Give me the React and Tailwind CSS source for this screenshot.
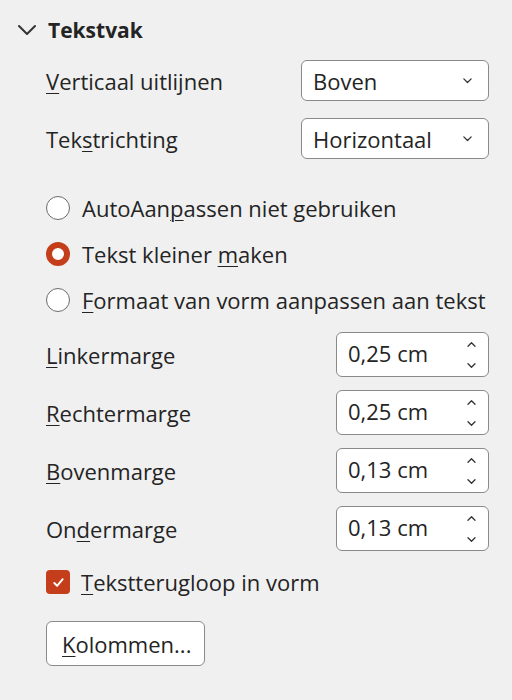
import { useState } from 'react';

const font = { fontFamily: '"Open Sans", "Noto Sans", Arial, sans-serif' };

function U({ children }) {
  return <span className="underline underline-offset-[3px] decoration-1">{children}</span>;
}

function Chevron({ className }) {
  return (
    <svg viewBox="0 0 16 16" className={className} fill="none" stroke="currentColor" strokeWidth="1.6" strokeLinecap="round" strokeLinejoin="round">
      <path d="M3.5 6l4.5 4.5L12.5 6" />
    </svg>
  );
}

function Select({ value }) {
  return (
    <div className="w-[188px] h-[41px] bg-white border border-[#8a8a8a] rounded-[6px] flex items-center justify-between pl-[11px] pr-[14px]">
      <span>{value}</span>
      <Chevron className="w-[13px] h-[13px] text-[#333]" />
    </div>
  );
}

function Spin({ value }) {
  return (
    <div className="w-[153px] h-[45px] bg-white border border-[#8a8a8a] rounded-[6px] flex items-center justify-between pl-[11px] pr-[11px]">
      <span className="-mt-[4px]">{value}</span>
      <div className="flex flex-col items-center gap-[14px] text-[#333]">
        <svg viewBox="0 0 12 8" className="w-[11px] h-[7px]" fill="none" stroke="currentColor" strokeWidth="1.5" strokeLinecap="round" strokeLinejoin="round"><path d="M2 6l4-4 4 4" /></svg>
        <svg viewBox="0 0 12 8" className="w-[11px] h-[7px]" fill="none" stroke="currentColor" strokeWidth="1.5" strokeLinecap="round" strokeLinejoin="round"><path d="M2 2l4 4 4-4" /></svg>
      </div>
    </div>
  );
}

function Radio({ checked, children, onClick }) {
  return (
    <div className="h-[46px] flex items-center gap-[12px] cursor-pointer" onClick={onClick}>
      {checked ? (
        <span className="w-[24px] h-[24px] rounded-full border-[6px] border-[#c43e1c] bg-white shrink-0" />
      ) : (
        <span className="w-[24px] h-[24px] rounded-full border-[1.5px] border-[#6b6b6b] bg-white shrink-0" />
      )}
      <span>{children}</span>
    </div>
  );
}

export default function App() {
  const [fit, setFit] = useState(1);
  const margins = [
    [<><U>L</U>inkermarge</>, '0,25 cm'],
    [<><U>R</U>echtermarge</>, '0,25 cm'],
    [<><U>B</U>ovenmarge</>, '0,13 cm'],
    [<>On<U>d</U>ermarge</>, '0,13 cm'],
  ];

  return (
    <div className="w-[512px] h-[700px] bg-[#f0f0f0] text-[#242424] text-[22px] leading-[30px] overflow-hidden" style={font}>
      <div className="h-[36px] mt-[12px] flex items-center pl-[17px] gap-[11px]">
        <svg viewBox="0 0 20 12" className="w-[20px] h-[12px] text-[#333]" fill="none" stroke="currentColor" strokeWidth="2" strokeLinecap="round" strokeLinejoin="round">
          <path d="M2 2l8 8 8-8" />
        </svg>
        <span className="font-bold text-[21px]">Tekstvak</span>
      </div>

      <div className="pl-[46px] pr-[23px]">
        <div className="mt-[12px] flex items-center justify-between">
          <span><U>V</U>erticaal uitlijnen</span>
          <Select value="Boven" />
        </div>
        <div className="mt-[17px] flex items-center justify-between">
          <span>Tek<U>s</U>trichting</span>
          <Select value="Horizontaal" />
        </div>

        <div className="mt-[26px]">
          <Radio checked={fit === 0} onClick={() => setFit(0)}>AutoAan<U>p</U>assen niet gebruiken</Radio>
          <Radio checked={fit === 1} onClick={() => setFit(1)}>Tekst kleiner <U>m</U>aken</Radio>
          <Radio checked={fit === 2} onClick={() => setFit(2)}><U>F</U>ormaat van vorm aanpassen aan tekst</Radio>
        </div>

        <div className="mt-[9px] flex flex-col gap-[13px]">
          {margins.map(([label, value], i) => (
            <div key={i} className="flex items-center justify-between">
              <span>{label}</span>
              <Spin value={value} />
            </div>
          ))}
        </div>

        <div className="mt-[16px] flex items-center gap-[11px]">
          <span className="w-[24px] h-[24px] rounded-[4px] bg-[#c43e1c] flex items-center justify-center shrink-0">
            <svg viewBox="0 0 16 16" className="w-[15px] h-[15px]" fill="none" stroke="white" strokeWidth="2" strokeLinecap="round" strokeLinejoin="round"><path d="M3.5 8.5l3 3 6-7" /></svg>
          </span>
          <span><U>T</U>ekstterugloop in vorm</span>
        </div>

        <button className="mt-[24px] w-[159px] h-[45px] bg-white border border-[#8a8a8a] rounded-[6px] text-left pl-[15px]">
          <U>K</U>olommen...
        </button>
      </div>
    </div>
  );
}
